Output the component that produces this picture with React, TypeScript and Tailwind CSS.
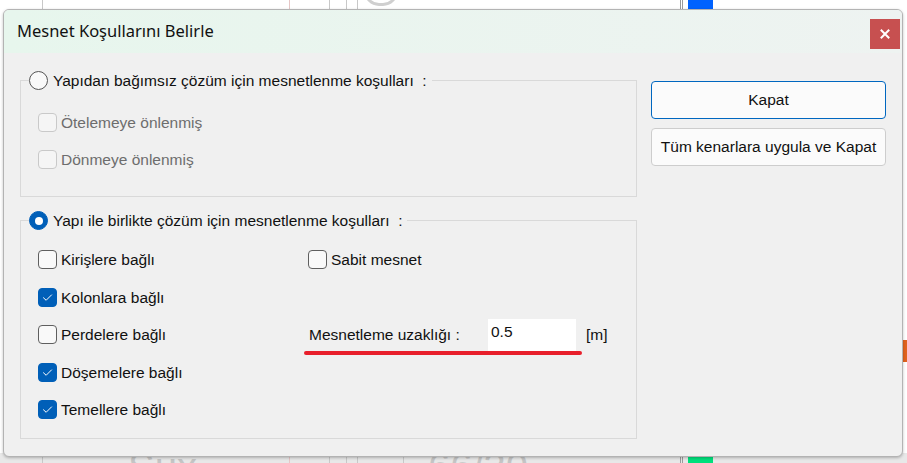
import clsx from "clsx"

// Checkbox square in the Windows 11 style
const CheckBox = ({ checked, disabled }: { checked?: boolean; disabled?: boolean }) => (
  <span
    className={clsx(
      "w-[19px] h-[19px] rounded-[4px] border flex items-center justify-center shrink-0",
      checked
        ? "bg-[#005fb8] border-[#005fb8]"
        : disabled
          ? "bg-[#f5f5f5] border-[#c9c9c9]"
          : "bg-[#f9f9f9] border-[#5f5f5f]"
    )}
  >
    {checked && (
      <svg viewBox="0 0 19 19" className="w-[19px] h-[19px]">
        <path d="M5 9.8 L8 12.6 L14 6.6" stroke="#ffffff" strokeWidth="1.1" fill="none" strokeLinecap="round" strokeLinejoin="round" />
      </svg>
    )}
  </span>
)

const Radio = ({ checked }: { checked?: boolean }) => (
  <span
    className={clsx(
      "w-[19px] h-[19px] rounded-full border flex items-center justify-center shrink-0",
      checked ? "bg-[#005fb8] border-[#005fb8]" : "bg-[#f9f9f9] border-[#555555]"
    )}
  >
    {checked && <span className="w-[8px] h-[8px] rounded-full bg-white" />}
  </span>
)

const CheckRow = ({ label, checked, disabled }: { label: string; checked?: boolean; disabled?: boolean }) => (
  <div className="flex items-center gap-[4px]">
    <CheckBox checked={checked} disabled={disabled} />
    <span className={disabled ? "text-[#6d6d6d]" : "text-[#111]"}>{label}</span>
  </div>
)

const Legend = ({ label, checked }: { label: string; checked?: boolean }) => (
  <legend className="ml-[8px] pr-[5px]">
    <div className="flex items-center gap-[5px] h-[19px]">
      <Radio checked={checked} />
      <span className="text-[#111] whitespace-pre">{label}</span>
    </div>
  </legend>
)

export default function App() {
  return (
    <div className="relative w-[907px] h-[463px] overflow-hidden bg-white font-['Liberation_Sans',Arial,sans-serif] text-[15.5px]">
      {/* Background drawing behind the dialog */}
      <div className="absolute left-0 right-0 bottom-0 h-[10px] bg-[#e8e8e8]" />
      <div className="absolute top-0 bottom-0 left-[42px] w-px bg-[#c8c8c8]" />
      <div className="absolute top-0 bottom-0 left-[289px] w-px bg-[#e6c6c6]" />
      <div className="absolute top-0 bottom-0 left-[329px] w-px bg-[#c8c8c8]" />
      <div className="absolute top-0 bottom-0 left-[346px] w-px bg-[#c8c8c8]" />
      <div className="absolute top-0 bottom-0 left-[357px] w-px bg-[#c8c8c8]" />
      <div className="absolute bottom-0 h-[10px] left-[403px] w-px bg-[#c8c8c8]" />
      <div className="absolute top-0 bottom-0 left-[680px] w-px bg-[#9a9a9a]" />
      <div className="absolute top-0 bottom-0 left-[682px] w-px bg-[#9a9a9a]" />
      <div className="absolute top-0 h-[10px] left-[688px] w-[25px] bg-[#0062ff]" />
      <div className="absolute bottom-0 h-[10px] left-[688px] w-[25px] bg-[#00e07c]" />
      <div className="absolute top-[-24px] left-[364px] w-[34px] h-[30px] rounded-full border-[3px] border-[#cfcfcf]" />
      <div className="absolute top-[340px] left-[902px] w-[6px] h-[22px] bg-[#e0621e]" />
      <div className="absolute top-[447px] left-[128px] text-[40px] leading-none text-[#c4c4c4]">Sûx</div>
      <div className="absolute top-[447px] left-[428px] text-[40px] leading-none text-[#c4c4c4]">66/30</div>

      {/* Dialog window */}
      <div className="absolute left-[3px] top-[9px] w-[900px] h-[448px] flex flex-col rounded-[6px] border border-[#b3b3b3] bg-[#f0f0f0] shadow-[0_1px_3px_rgba(0,0,0,0.25)] overflow-hidden">
        {/* Title bar */}
        <div className="h-[43px] flex items-start justify-between bg-gradient-to-r from-[#e7f6ed] to-[#eef3f1]">
          <span className="mt-[9px] ml-[13px] font-['Noto_Sans',sans-serif] text-[16.5px] text-[#111]">
            Mesnet Koşullarını Belirle
          </span>
          <button className="mt-[9px] mr-[2px] w-[30px] h-[30px] bg-[#c75050] flex items-center justify-center">
            <svg viewBox="0 0 10 10" className="w-[10px] h-[10px]">
              <path d="M1.5 1.5 L8.5 8.5 M8.5 1.5 L1.5 8.5" stroke="#ffffff" strokeWidth="2" strokeLinecap="square" />
            </svg>
          </button>
        </div>

        {/* Body */}
        <div className="flex pt-[18px] pl-[16px] gap-[14px]">
          <div className="flex flex-col w-[617px]">
            <fieldset className="border border-[#d9d9d9] pb-[18px]">
              <Legend label="Yapıdan bağımsız çözüm için mesnetlenme koşulları  :" />
              <div className="flex flex-col pl-[17px] pt-[14px]">
                <div className="h-[37px] flex items-center">
                  <CheckRow label="Ötelemeye önlenmiş" disabled />
                </div>
                <div className="h-[37px] flex items-center">
                  <CheckRow label="Dönmeye önlenmiş" disabled />
                </div>
              </div>
            </fieldset>

            <fieldset className="mt-[14px] border border-[#d9d9d9] pb-[9px]">
              <Legend label="Yapı ile birlikte çözüm için mesnetlenme koşulları  :" checked />
              <div className="grid grid-cols-[270px_1fr] auto-rows-[37.5px] pl-[17px] pt-[11px]">
                <div className="flex items-center">
                  <CheckRow label="Kirişlere bağlı" />
                </div>
                <div className="flex items-center">
                  <CheckRow label="Sabit mesnet" />
                </div>
                <div className="flex items-center">
                  <CheckRow label="Kolonlara bağlı" checked />
                </div>
                <div />
                <div className="flex items-center">
                  <CheckRow label="Perdelere bağlı" />
                </div>
                <div className="relative flex items-center">
                  <span className="w-[180px] pl-px text-[#111]">Mesnetleme uzaklığı :</span>
                  <div className="w-[88px] h-[32px] bg-white pl-[3px] pt-[5px] leading-none text-[#111]">0.5</div>
                  <span className="ml-[10px] text-[#111]">[m]</span>
                  {/* red annotation underline */}
                  <div className="absolute left-[-4px] top-[35px] w-[278px] h-[4px] rounded-full bg-[#e81f2b]" />
                </div>
                <div className="flex items-center">
                  <CheckRow label="Döşemelere bağlı" checked />
                </div>
                <div />
                <div className="flex items-center">
                  <CheckRow label="Temellere bağlı" checked />
                </div>
                <div />
              </div>
            </fieldset>
          </div>

          {/* Buttons */}
          <div className="flex flex-col gap-[9px] mt-[10px] w-[235px]">
            <button className="h-[38px] rounded-[4px] border border-[#0067c0] bg-[#fbfbfb] text-[#111]">Kapat</button>
            <button className="h-[38px] rounded-[4px] border border-[#cdcdcd] bg-[#fbfbfb] text-[#111]">
              Tüm kenarlara uygula ve Kapat
            </button>
          </div>
        </div>
      </div>
    </div>
  )
}
